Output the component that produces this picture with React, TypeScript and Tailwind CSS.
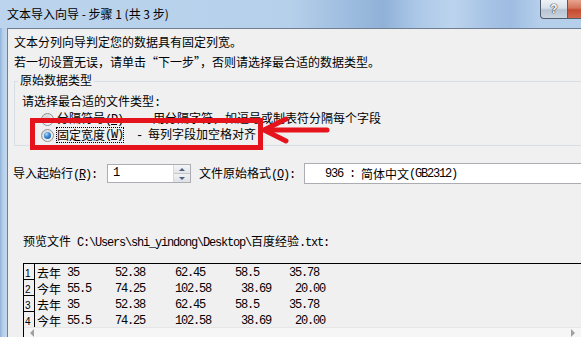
import React from "react";

const MONO = "font-['Liberation_Mono',monospace] tracking-[-1.2px]";

function Radio({ checked }: { checked?: boolean }) {
  return (
    <div className="w-[13px] h-[13px] shrink-0 rounded-full border border-[#8d9196] bg-[linear-gradient(135deg,#d2d4d6,#fbfbfb)] flex items-center justify-center">
      {checked ? (
        <div className="w-[7px] h-[7px] rounded-full bg-[radial-gradient(circle_at_35%_30%,#a8dcff_0%,#3a86d0_45%,#0f4f93_100%)]" />
      ) : (
        <div className="w-[7px] h-[7px] rounded-full bg-[linear-gradient(135deg,#c9cbcd,#eeeeee)]" />
      )}
    </div>
  );
}

function DataRow({ n, name, rest }: { n: string; name: string; rest: string }) {
  return (
    <div className="flex h-[16px] shrink-0">
      <div className="w-[11px] h-[16px] border-r border-b border-black flex items-end pl-[1px]">
        <span className="font-['Liberation_Sans',sans-serif] text-[10px] leading-[10px]">{n}</span>
      </div>
      <div className="flex items-center h-[16px] pl-[2px] pt-[1px] whitespace-pre">
        <span className="w-[30px] leading-[16px]">{name}</span>
        <span className={MONO + " text-[12px] leading-[16px]"}>{rest}</span>
      </div>
    </div>
  );
}

export default function App() {
  return (
    <div className="relative w-[581px] h-[337px] overflow-hidden bg-[#f0f0f0] font-['Noto_Sans_CJK_SC','Noto_Sans',sans-serif] text-[12px] text-black flex flex-col">
      {/* title bar */}
      <div className="h-[28px] shrink-0 flex items-start bg-[linear-gradient(90deg,#bcd4ed_0%,#b6d0eb_50%,#9dbcdf_60%,#90b1d8_66%,#adc9e8_72%,#bcd4ed_78%,#a6c3e5_84%,#9fbde2_88%,#b5cfeb_93%)]">
        <div className="pl-[7px] h-[27px] flex items-center leading-none text-[12px]">
          文本导入向导 - 步骤 1 (共 3 步)
        </div>
        <div className="ml-auto flex items-start">
          <div className="w-[28px] h-[19px] border border-t-0 border-[#4f5d6d] rounded-bl-[4px] bg-[linear-gradient(180deg,#eef2f6_0%,#d8e0e9_45%,#b7c4d2_55%,#c9d4df_100%)] flex items-center justify-center">
            <span className="font-['Liberation_Sans',sans-serif] font-bold text-[12px] leading-none text-white [text-shadow:0_0_1px_#2b3a4a,0_0_1px_#2b3a4a,0_0_1px_#2b3a4a]">
              ?
            </span>
          </div>
          <div className="w-[13px] h-[19px] border-b border-[#4f5d6d] bg-[linear-gradient(180deg,#e8a58f_0%,#d3735a_45%,#c24a2f_55%,#d2684b_100%)]" />
        </div>
      </div>

      <div className="flex-1 flex min-h-0">
        {/* left frame */}
        <div className="w-[7px] shrink-0 bg-[linear-gradient(90deg,#8fb2da_0%,#b6cfea_40%,#c3d8ee_100%)]" />
        {/* content */}
        <div className="flex-1 min-w-0 border-l border-t border-[#6f7f90] flex flex-col">
          <div className="pl-[6px] pt-[3px] leading-[20px]">
            <div>文本分列向导判定您的数据具有固定列宽。</div>
            <div>若一切设置无误，请单击“下一步”，否则请选择最合适的数据类型。</div>
          </div>

          {/* group box */}
          <div className="relative mt-[9px] ml-[6px] h-[65px] shrink-0 border border-r-0 border-[#d5dfe5]">
            <div className="absolute left-[3px] top-[-10px] bg-[#f0f0f0] px-[2px] leading-[16px]">
              原始数据类型
            </div>
            <div className="pt-[11px] pl-[7px]">
              <div className="leading-[16px]">
                请选择最合适的文件类型<span className={MONO}>:</span>
              </div>
              <div className="flex items-center h-[16px] pl-[19px]">
                <Radio />
                <span className="ml-[3px] leading-[16px] whitespace-pre">
                  分隔符号<span className={MONO}>(<span className="underline">D</span>)   - </span>用分隔字符，如逗号或制表符分隔每个字段
                </span>
              </div>
              <div className="flex items-center h-[16px] pl-[19px]">
                <Radio checked />
                <span className="ml-[2px] border border-dotted border-black leading-[14px] h-[16px] flex items-center">
                  固定宽度<span className={MONO}>(<span className="underline">W</span>)</span>
                </span>
                <span className="leading-[16px] whitespace-pre">
                  <span className={MONO}>  - </span>每列字段加空格对齐
                </span>
              </div>
            </div>
          </div>

          {/* start row / format */}
          <div className="mt-[17px] h-[21px] shrink-0 flex items-center pl-[5px]">
            <div className="w-[94px] leading-[16px]">
              导入起始行<span className={MONO}>(<span className="underline">R</span>):</span>
            </div>
            <div className="w-[84px] h-[19px] border border-[#abadb3] bg-white flex">
              <div className={"flex-1 pl-[5px] leading-[17px] text-[12px] " + MONO}>1</div>
              <div className="w-[17px] flex flex-col border-l border-[#d6d9de]">
                <div className="flex-1 flex items-center justify-center bg-[linear-gradient(180deg,#f5f6f7,#e3e5e8)] border-b border-[#c3c7cc]">
                  <div className="w-0 h-0 border-l-[3px] border-r-[3px] border-b-[3px] border-l-transparent border-r-transparent border-b-[#4d6185]" />
                </div>
                <div className="flex-1 flex items-center justify-center bg-[linear-gradient(180deg,#f1f2f4,#dfe2e6)]">
                  <div className="w-0 h-0 border-l-[3px] border-r-[3px] border-t-[3px] border-l-transparent border-r-transparent border-t-[#4d6185]" />
                </div>
              </div>
            </div>
            <div className="ml-[8px] w-[105px] leading-[16px]">
              文件原始格式<span className={MONO}>(<span className="underline">O</span>):</span>
            </div>
            <div className="flex-1 h-[21px] border border-r-0 border-[#abadb3] bg-white flex items-center pl-[20px] whitespace-pre leading-[16px]">
              <span className={MONO}>936 : </span>简体中文<span className={MONO}>(GB2312)</span>
            </div>
          </div>

          {/* preview label */}
          <div className="mt-[49px] pl-[15px] leading-[16px] whitespace-pre">
            预览文件<span className={MONO}> C:\Users\shi_yindong\Desktop\</span>百度经验<span className={MONO}>.txt:</span>
          </div>

          {/* preview table */}
          <div className="mt-[12px] ml-[15px] flex-1 min-h-0 border-t border-l border-black flex flex-col">
            <div className="h-[63px] shrink-0 overflow-hidden flex flex-col">
              <DataRow n="1" name="去年" rest="35      52.38     62.45     58.5     35.78" />
              <DataRow n="2" name="今年" rest="55.5    74.25     102.58     38.69    20.00" />
              <DataRow n="3" name="去年" rest="35      52.38     62.45     58.5     35.78" />
              <DataRow n="4" name="今年" rest="55.5    74.25     102.58     38.69    20.00" />
            </div>
            <div className="flex-1 bg-[#f6f6f6] border-t border-[#e6e6e6] flex items-center justify-between pl-[6px] pr-[6px]">
              <div className="w-0 h-0 border-t-[4px] border-b-[4px] border-r-[4px] border-t-transparent border-b-transparent border-r-[#a0a0a0]" />
              <div className="w-0 h-0 border-t-[4px] border-b-[4px] border-l-[4px] border-t-transparent border-b-transparent border-l-[#a0a0a0]" />
            </div>
          </div>
        </div>
      </div>

      {/* red annotation box */}
      <div className="absolute left-[30px] top-[118px] w-[233px] h-[32px] border-[5px] border-[#e5141c]" />
      {/* red arrow */}
      <svg className="absolute left-[259px] top-[114px]" width="72" height="32" viewBox="0 0 72 32">
        <line x1="7" y1="16" x2="68" y2="16" stroke="#e5141c" strokeWidth="5" strokeLinecap="round" />
        <polyline points="27,5 5,16 27,27" fill="none" stroke="#e5141c" strokeWidth="5" strokeLinecap="round" strokeLinejoin="round" />
      </svg>
    </div>
  );
}
